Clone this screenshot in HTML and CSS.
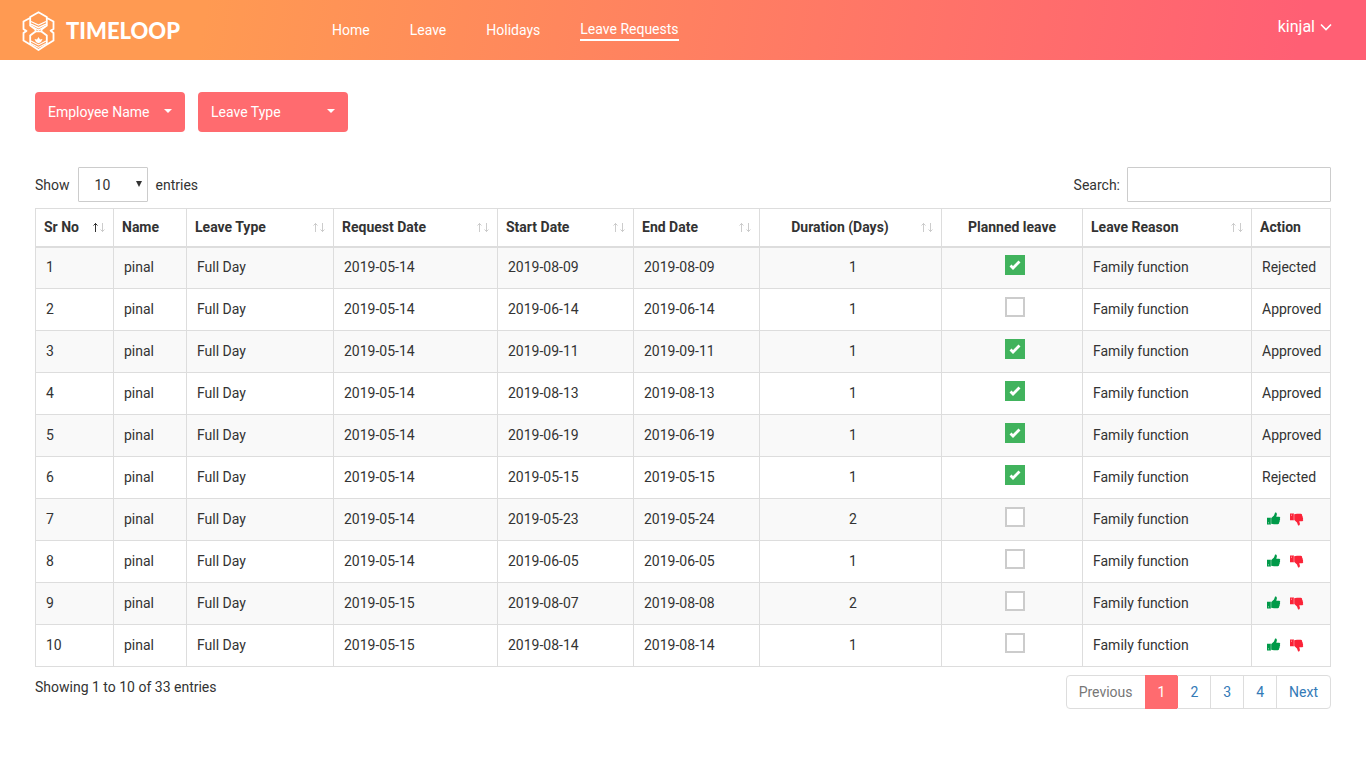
FILE: index.html
```html
<!DOCTYPE html>
<html lang="en">
<head>
<meta charset="utf-8">
<title>Timeloop - Leave Requests</title>
<link rel="stylesheet" href="styles.css">
</head>
<body>
<svg class="sprite" aria-hidden="true">
  <symbol id="up" viewBox="0 0 14 14"><path d="M0 5.800h4V12.500H0zM4 6.200L7 3.500 8 .8C8.300 0 10 .4 9.900 2.200L9.300 4.800H12.300C13.500 5 13.400 6.400 12.800 6.700 13.400 7.400 13.100 8.500 12.500 8.700 12.900 9.500 12.500 10.400 12 10.600 12.300 11.500 11.800 12.300 10.800 12.300H7L4 11.700z"/><path class="cuff" d="M3.800 6h.4v6.200h-.4zM1 10.500h.8v.8H1z"/></symbol>
  <symbol id="down" viewBox="0 0 14 14"><path d="M0 1.500h4V8.200H0zM4 7.800L7 10.500 8 13.200C8.300 14 10 13.600 9.900 11.800L9.300 9.200H12.300C13.500 9 13.400 7.600 12.800 7.300 13.400 6.600 13.100 5.500 12.500 5.300 12.900 4.500 12.500 3.600 12 3.400 12.300 2.500 11.800 1.700 10.800 1.700H7L4 2.300z"/><path class="cuff" d="M3.800 1.800h.4V8h-.4zM1 2.700h.8v.8H1z"/></symbol>
  <symbol id="sort" viewBox="0 0 13 10"><path class="asc" d="M3.500 10V1M1.500 3.500L3.500 1.500 5.500 3.500"/><path class="desc" d="M10.500 1v9M8.500 7.500L10.500 9.500 12.500 7.500"/></symbol>
</svg>

<header class="topbar">
  <a class="brand" href="#" aria-label="Timeloop">
    <svg class="brand-mark" viewBox="0 0 34 40" fill="none" stroke="#fff" stroke-width="1.800">
      <path d="M16.500 1.200l8.300 4.800v8.500l-5.300 4v2l5.300 4v9l-8.300 5.500-8.300-5.500v-9l5.300-4v-2l-5.300-4V6z"/>
      <path d="M8 7L1.500 10.500V18l3.500 2.500M5 19.500l-3.500 2.500v7.500L8 33.500M25 7l6.500 3.500V18L28 20M28.500 19.500l3 2.500v7.500L25 33.500"/>
      <path d="M9 10.500l7.500 3.500 7.500-3.500M9 13.200l7.500 3.500 7.500-3.500M10 15.500l6.500 3.500 6.500-3.500M13.500 20.500h6" stroke-width="1.300"/>
      <path d="M9 30l7.500 4 7.500-4M9 32.500l7.500 4 7.500-4" stroke-width="1.100"/>
      <path d="M12.500 28l2.500.5 1.500-2.500 1.500 2.500 2.500-.5-1.500 3-2.500 1.300-2.500-1.300z" fill="#fff" stroke="none"/>
    </svg>
    <span class="brand-name">TIMELOOP</span>
  </a>
  <nav class="menu">
    <a href="#">Home</a>
    <a href="#">Leave</a>
    <a href="#">Holidays</a>
    <a class="current" href="#">Leave Requests</a>
  </nav>
  <button class="user" type="button">kinjal
    <svg class="chevron" viewBox="0 0 12 8"><path d="M1 1.500l5 5 5-5"/></svg>
  </button>
</header>

<main class="content">
  <div class="filters">
    <button class="filter" type="button">Employee Name<span class="caret"></span></button>
    <button class="filter" type="button">Leave Type<span class="caret"></span></button>
  </div>

  <div class="toolbar">
    <label class="field">Show
      <span class="picker"><select><option>10</option><option>25</option><option>50</option></select></span>
      entries</label>
    <label class="field find">Search: <input class="search" type="search"></label>
  </div>

  <table class="requests">
    <colgroup>
      <col class="w-no"><col class="w-name"><col class="w-type"><col class="w-request"><col class="w-start"><col class="w-end"><col class="w-days"><col class="w-planned"><col class="w-reason"><col class="w-action">
    </colgroup>
    <thead>
      <tr>
        <th><div class="head">Sr No<svg class="sort sorted"><use href="#sort"/></svg></div></th>
        <th>Name</th>
        <th><div class="head">Leave Type<svg class="sort"><use href="#sort"/></svg></div></th>
        <th><div class="head">Request Date<svg class="sort"><use href="#sort"/></svg></div></th>
        <th><div class="head">Start Date<svg class="sort"><use href="#sort"/></svg></div></th>
        <th><div class="head">End Date<svg class="sort"><use href="#sort"/></svg></div></th>
        <th><div class="head"><span class="mid">Duration (Days)</span><svg class="sort"><use href="#sort"/></svg></div></th>
        <th class="planned">Planned leave</th>
        <th><div class="head">Leave Reason<svg class="sort"><use href="#sort"/></svg></div></th>
        <th>Action</th>
      </tr>
    </thead>
    <tbody>
      <tr><td>1</td><td>pinal</td><td>Full Day</td><td>2019-05-14</td><td>2019-08-09</td><td>2019-08-09</td><td class="center">1</td><td class="center"><input class="tick" type="checkbox" aria-label="Planned leave" checked></td><td>Family function</td><td>Rejected</td></tr>
      <tr><td>2</td><td>pinal</td><td>Full Day</td><td>2019-05-14</td><td>2019-06-14</td><td>2019-06-14</td><td class="center">1</td><td class="center"><input class="tick" type="checkbox" aria-label="Planned leave"></td><td>Family function</td><td>Approved</td></tr>
      <tr><td>3</td><td>pinal</td><td>Full Day</td><td>2019-05-14</td><td>2019-09-11</td><td>2019-09-11</td><td class="center">1</td><td class="center"><input class="tick" type="checkbox" aria-label="Planned leave" checked></td><td>Family function</td><td>Approved</td></tr>
      <tr><td>4</td><td>pinal</td><td>Full Day</td><td>2019-05-14</td><td>2019-08-13</td><td>2019-08-13</td><td class="center">1</td><td class="center"><input class="tick" type="checkbox" aria-label="Planned leave" checked></td><td>Family function</td><td>Approved</td></tr>
      <tr><td>5</td><td>pinal</td><td>Full Day</td><td>2019-05-14</td><td>2019-06-19</td><td>2019-06-19</td><td class="center">1</td><td class="center"><input class="tick" type="checkbox" aria-label="Planned leave" checked></td><td>Family function</td><td>Approved</td></tr>
      <tr><td>6</td><td>pinal</td><td>Full Day</td><td>2019-05-14</td><td>2019-05-15</td><td>2019-05-15</td><td class="center">1</td><td class="center"><input class="tick" type="checkbox" aria-label="Planned leave" checked></td><td>Family function</td><td>Rejected</td></tr>
      <tr><td>7</td><td>pinal</td><td>Full Day</td><td>2019-05-14</td><td>2019-05-23</td><td>2019-05-24</td><td class="center">2</td><td class="center"><input class="tick" type="checkbox" aria-label="Planned leave"></td><td>Family function</td><td><div class="votes"><button class="vote yes" type="button" aria-label="Approve"><svg><use href="#up"/></svg></button><button class="vote no" type="button" aria-label="Reject"><svg><use href="#down"/></svg></button></div></td></tr>
      <tr><td>8</td><td>pinal</td><td>Full Day</td><td>2019-05-14</td><td>2019-06-05</td><td>2019-06-05</td><td class="center">1</td><td class="center"><input class="tick" type="checkbox" aria-label="Planned leave"></td><td>Family function</td><td><div class="votes"><button class="vote yes" type="button" aria-label="Approve"><svg><use href="#up"/></svg></button><button class="vote no" type="button" aria-label="Reject"><svg><use href="#down"/></svg></button></div></td></tr>
      <tr><td>9</td><td>pinal</td><td>Full Day</td><td>2019-05-15</td><td>2019-08-07</td><td>2019-08-08</td><td class="center">2</td><td class="center"><input class="tick" type="checkbox" aria-label="Planned leave"></td><td>Family function</td><td><div class="votes"><button class="vote yes" type="button" aria-label="Approve"><svg><use href="#up"/></svg></button><button class="vote no" type="button" aria-label="Reject"><svg><use href="#down"/></svg></button></div></td></tr>
      <tr><td>10</td><td>pinal</td><td>Full Day</td><td>2019-05-15</td><td>2019-08-14</td><td>2019-08-14</td><td class="center">1</td><td class="center"><input class="tick" type="checkbox" aria-label="Planned leave"></td><td>Family function</td><td><div class="votes"><button class="vote yes" type="button" aria-label="Approve"><svg><use href="#up"/></svg></button><button class="vote no" type="button" aria-label="Reject"><svg><use href="#down"/></svg></button></div></td></tr>
    </tbody>
  </table>

  <div class="footer">
    <p class="info">Showing 1 to 10 of 33 entries</p>
    <nav class="pages" aria-label="Pages">
      <a class="off" href="#">Previous</a>
      <a class="active" href="#">1</a>
      <a href="#">2</a>
      <a href="#">3</a>
      <a href="#">4</a>
      <a href="#">Next</a>
    </nav>
  </div>
</main>
</body>
</html>
```
FILE: styles.css
```css
* { box-sizing: border-box; }

body {
  margin: 0;
  background: #fff;
  color: #333;
  font: 14px/20px Roboto, "Liberation Sans", sans-serif;
}

a { text-decoration: none; }
button, input, select { font: inherit; }
button { cursor: pointer; }
.sprite { display: none; }

.topbar {
  display: flex;
  align-items: center;
  height: 60px;
  padding: 0 33px 0 22px;
  background: linear-gradient(100deg, #ff9a52 15%, #ff5f74 95%);
}
.brand {
  display: flex;
  align-items: center;
  gap: 10px;
  width: 310px;
  padding-top: 2px;
  color: #fff;
}
.brand-mark { width: 34px; height: 40px; }
.brand-name { font: 900 22px/24px Lato, sans-serif; }
.menu { display: flex; align-items: center; gap: 40px; }
.menu a { color: #fff; }
.menu .current { border-bottom: 2px solid #fff; }
.user {
  display: flex;
  align-items: center;
  gap: 5px;
  margin-left: auto;
  padding: 0 1px 6px 0;
  border: 0;
  background: none;
  color: #fff;
  font-size: 16px;
}
.chevron { width: 12px; height: 8px; fill: none; stroke: #fff; stroke-width: 1.600; }

.content { padding: 32px 35px; }

.filters { display: flex; gap: 13px; margin-bottom: 35px; }
.filter {
  display: flex;
  align-items: center;
  justify-content: space-between;
  width: 150px;
  height: 40px;
  padding: 0 13px;
  border: 0;
  border-radius: 4px;
  background: #ff6b6f;
  color: #fff;
}
.caret {
  margin-bottom: 2px;
  border: 4px solid transparent;
  border-top-color: #fff;
  border-bottom: 0;
}

.toolbar { display: flex; justify-content: space-between; margin-bottom: 6px; }
.field { display: flex; align-items: center; gap: 8px; }
.find { gap: 7px; }
.picker { position: relative; }
.picker select {
  display: block;
  appearance: none;
  width: 70px;
  height: 35px;
  padding: 0 16px;
  border: 1px solid #ccc;
  border-radius: 1px;
  background: #fff;
  color: #333;
}
.picker::after {
  content: "";
  position: absolute;
  top: 14px;
  right: 6px;
  border: 3px solid transparent;
  border-top: 6px solid #333;
  border-bottom: 0;
  pointer-events: none;
}
.search {
  width: 204px;
  height: 35px;
  padding: 0 8px;
  border: 1px solid #ccc;
  border-radius: 1px;
  background: #fff;
}

.requests { width: 100%; table-layout: fixed; border-collapse: collapse; }
.w-no { width: 78px; }
.w-name { width: 73px; }
.w-type { width: 147px; }
.w-request { width: 164px; }
.w-start { width: 136px; }
.w-end { width: 126px; }
.w-days { width: 182px; }
.w-planned { width: 141px; }
.w-reason { width: 169px; }
.w-action { width: 79px; }

.requests th, .requests td { border: 1px solid #ddd; text-align: left; }
.requests th { height: 38px; padding: 0 8px; border-bottom-width: 2px; font-weight: 700; }
.requests td { height: 42px; padding: 0 10px 2px; }
.requests tbody tr:nth-child(odd) { background: #f9f9f9; }
.requests .planned { text-align: center; }
.requests .center { padding-left: 15px; text-align: center; }
.head { display: flex; align-items: center; justify-content: space-between; }
.mid { flex: 1; padding-right: 8px; text-align: center; }
.sort { --asc: #ccc; flex: none; width: 13px; height: 10px; fill: none; }
.sorted { --asc: #333; }
.asc { stroke: var(--asc); }
.desc { stroke: #ccc; }

.tick {
  display: block;
  appearance: none;
  width: 20px;
  height: 20px;
  margin: 0 auto 4px;
  border: 2px solid #ccc;
  background: #fff;
}
.tick:checked {
  border-color: #41b35d;
  background: #41b35d url("data:image/svg+xml,%3Csvg xmlns='http://www.w3.org/2000/svg' viewBox='0 0 16 16'%3E%3Cpath d='M3.500 8.500l2.500 2.500 6.500-6.500' fill='none' stroke='white' stroke-width='2.800'/%3E%3C/svg%3E") center / 16px 16px no-repeat;
}

.votes { display: flex; gap: 9px; padding-left: 5px; }
.vote { display: flex; padding: 0; border: 0; background: none; }
.vote svg { width: 14px; height: 14px; }
.yes { fill: #009a49; }
.no { fill: #fb2338; }
.cuff { fill: #fff; }

.footer { display: flex; justify-content: space-between; padding-top: 8px; }
.info { margin: 2px 0 0; }
.pages { display: flex; border: 1px solid #ddd; border-radius: 4px; }
.pages a { padding: 6px 12px; border-left: 1px solid #ddd; color: #337ab7; }
.pages .off { border-left: 0; color: #777; }
.pages .active { margin: -1px 0; padding: 7px 12px; border-color: #ff6b6f; background: #ff6b6f; color: #fff; }
.pages .active + a { border-left-color: #ff6b6f; }
```
